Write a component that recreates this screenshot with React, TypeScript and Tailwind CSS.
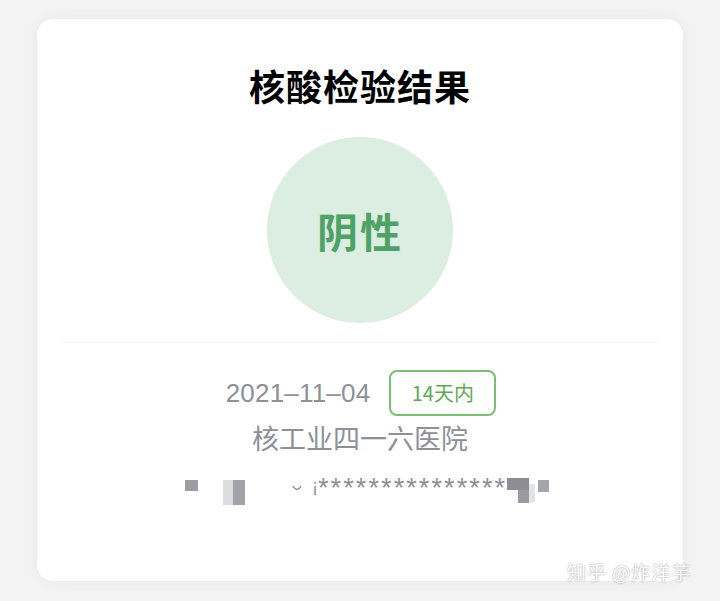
export default function App() {
  const font = { fontFamily: '"Noto Sans CJK SC", "Noto Sans", sans-serif' };
  const latin = { fontFamily: '"Liberation Sans", Arial, sans-serif' };

  return (
    <div
      className="relative w-[720px] h-[601px] bg-[#f3f3f3] pt-[19px] pl-[37px] overflow-hidden"
      style={font}
    >
      <div className="w-[646px] h-[562px] bg-white rounded-[16px] shadow-[0_0_14px_rgba(0,0,0,0.05)] flex flex-col items-center pt-[46px]">
        <h1 className="text-[36px] leading-[40px] font-bold text-black tracking-[1px]">
          核酸检验结果
        </h1>

        <div className="mt-[32px] w-[186px] h-[186px] rounded-full bg-[#dcede2] flex items-center justify-center">
          <span className="text-[41px] leading-none font-bold text-[#4fa265] tracking-[2px]">
            阴性
          </span>
        </div>

        <div className="mt-[19px] h-px w-[600px] bg-[#f4f4f4]" />

        <div className="mt-[27px] flex items-center gap-[19px] pl-[2px]">
          <span className="text-[26px] leading-none text-[#8d9098] tracking-[0.2px]" style={latin}>
            2021–11–04
          </span>
          <span className="h-[46px] w-[107px] border-2 border-[#7bbf73] rounded-[8px] flex items-center justify-center text-[20px] text-[#5daa55]">
            14天内
          </span>
        </div>

        <div className="mt-[5px] text-[27px] leading-[34px] text-[#8d9098]">
          核工业四一六医院
        </div>

        {/* masked id number */}
        <div className="mt-[21px] w-[380px] h-[30px] flex items-start text-[#8e9097]">
          <div className="mt-[4px] ml-[15px] w-[13px] h-[11px] bg-[#9d9ea5]" />
          <div className="mt-[4px] ml-[25px] w-[22px] h-[25px] bg-[#dcdddf] flex justify-end">
            <div className="w-[12px] h-[25px] bg-[#a3a4aa]" />
          </div>
          <svg className="mt-[9px] ml-[47px]" width="10" height="8" viewBox="0 0 10 8">
            <path d="M1 1 Q5 8 9 1" fill="none" stroke="#8e9097" strokeWidth="1.4" />
          </svg>
          <span className="ml-[10px] w-[6px] text-[18px] leading-[20px]" style={latin}>
            ¡
          </span>
          <span
            className="shrink-0 text-[27px] leading-[24px] tracking-[2.1px] whitespace-nowrap"
            style={latin}
          >
            ***************
          </span>
          <div className="mt-[2px] w-[22px] h-[25px] flex flex-col">
            <div className="h-[12px] bg-[#8d8e94]" />
            <div className="h-[13px] w-[11px] ml-[11px] bg-[#9a9ba0]" />
          </div>
          <div className="mt-[8px] w-[6px] h-[18px] bg-[#e4e4e6]" />
          <div className="mt-[4px] ml-[3px] w-[11px] h-[12px] bg-[#a5a6ab]" />
        </div>
      </div>

      <div
        className="absolute left-[567px] top-[560px] text-[19px] leading-[24px] text-white tracking-[1px]"
        style={{ textShadow: "0 0 2px rgba(0,0,0,0.45)" }}
      >
        知乎 @炸洋芋
      </div>
    </div>
  );
}
